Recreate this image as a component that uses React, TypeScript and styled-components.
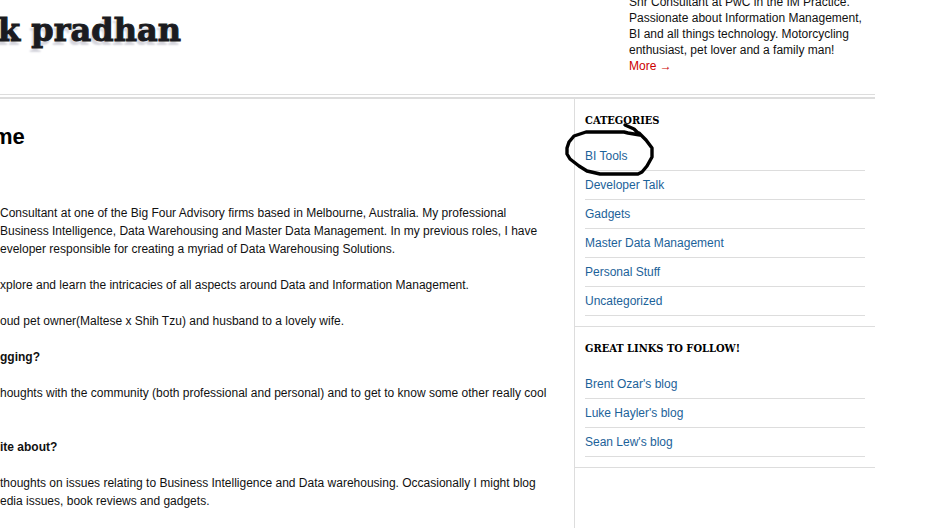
import React from "react";
import styled, { createGlobalStyle } from "styled-components";

const GlobalStyle = createGlobalStyle`
  * { box-sizing: border-box; }
  body {
    margin: 0;
    background: #fff;
    color: #111;
    font: 12px/18px "Liberation Sans", Arial, sans-serif;
    overflow: hidden;
  }
`;

const Page = styled.div`
  display: flex;
  flex-direction: column;
  min-height: 100vh;
  margin-right: 74px;
`;

const Header = styled.header`
  display: flex;
  justify-content: space-between;
  overflow: hidden;
  padding-bottom: 20px;
  border-bottom: 1px solid #ddd;
`;

const Logo = styled.div`
  margin: 10px 0 0 -2px;
  color: #1b1b20;
  font: bold 32px/40px "DejaVu Serif", serif;
  -webkit-text-stroke: 1px #1b1b20;
  text-shadow: -2px 4px 2px #d4d4dc;
  white-space: nowrap;
`;

const Intro = styled.p`
  width: 246px;
  margin: -6px 0 0;
  line-height: 16px;
`;

const MoreLink = styled.a`
  color: #c00;
  text-decoration: none;
`;

const Columns = styled.div`
  display: flex;
  flex: 1;
  margin-top: 2px;
  border-top: 2px solid #ddd;
`;

const Article = styled.main`
  flex: 1;
  min-width: 0;
  white-space: nowrap;
`;

const Title = styled.h1`
  margin: 24px 0 54px -7px;
  font-size: 22px;
  line-height: 27px;
  color: #000;
`;

const Paragraph = styled.p`
  margin: 0 0 18px;
`;

const Question = styled.h2`
  margin: 0 0 18px;
  font-size: 12px;
  line-height: 18px;
`;

const Sidebar = styled.aside`
  width: 301px;
  border-left: 1px solid #ddd;
`;

const Widget = styled.section`
  padding: 13px 10px 10px;
  border-bottom: 1px solid #ddd;
`;

const WidgetTitle = styled.h3`
  margin: 0 0 12px;
  color: #000;
  font: bold 11px/18px "DejaVu Serif Condensed", "DejaVu Serif", serif;
  text-transform: uppercase;
`;

const LinkList = styled.ul`
  margin: 0;
  padding: 0;
  list-style: none;
`;

const LinkItem = styled.li`
  position: relative;
  padding: 5px 0;
  border-bottom: 1px solid #ddd;
`;

const SideLink = styled.a`
  color: #1c6299;
  text-decoration: none;
`;

const Marker = styled.svg`
  position: absolute;
  left: -21px;
  top: -21px;
  pointer-events: none;
`;

const categories = [
  "BI Tools",
  "Developer Talk",
  "Gadgets",
  "Master Data Management",
  "Personal Stuff",
  "Uncategorized",
];

const blogs = ["Brent Ozar's blog", "Luke Hayler's blog", "Sean Lew's blog"];

const HandDrawnCircle = () => (
  <Marker width="92" height="58" viewBox="0 0 92 58" aria-hidden="true">
    <path
      d="M61 4 L70 8 L76 14 L64 12 L60 11 L22 11 L10 15 L5 21 L3 27 L3 33 L6 38 L15 45 L23 50 L36 53 L74 53 L78 51 L83 45 L88 36 L88 27 L82 19 L75 12"
      fill="none"
      stroke="#000"
      strokeWidth="3.4"
      strokeLinecap="round"
      strokeLinejoin="round"
    />
  </Marker>
);

type LinksProps = { title: string; items: string[]; marked?: string };

const Links = ({ title, items, marked }: LinksProps) => (
  <Widget>
    <WidgetTitle>{title}</WidgetTitle>
    <LinkList>
      {items.map((item) => (
        <LinkItem key={item}>
          <SideLink href="#">{item}</SideLink>
          {item === marked && <HandDrawnCircle />}
        </LinkItem>
      ))}
    </LinkList>
  </Widget>
);

export default function App() {
  return (
    <>
      <GlobalStyle />
      <Page>
        <Header>
          <Logo>k pradhan</Logo>
          <Intro>
            Snr Consultant at PwC in the IM Practice.
            <br />
            Passionate about Information Management,
            <br />
            BI and all things technology. Motorcycling
            <br />
            enthusiast, pet lover and a family man!
            <br />
            <MoreLink href="#">More →</MoreLink>
          </Intro>
        </Header>
        <Columns>
          <Article>
            <Title>me</Title>
            <Paragraph>
              Consultant at one of the Big Four Advisory firms based in Melbourne, Australia. My professional
              <br />
              Business Intelligence, Data Warehousing and Master Data Management. In my previous roles, I have
              <br />
              eveloper responsible for creating a myriad of Data Warehousing Solutions.
            </Paragraph>
            <Paragraph>
              xplore and learn the intricacies of all aspects around Data and Information Management.
            </Paragraph>
            <Paragraph>oud pet owner(Maltese x Shih Tzu) and husband to a lovely wife.</Paragraph>
            <Question>gging?</Question>
            <Paragraph>
              houghts with the community (both professional and personal) and to get to know some other really cool
              <br />
              <br />
            </Paragraph>
            <Question>ite about?</Question>
            <Paragraph>
              thoughts on issues relating to Business Intelligence and Data warehousing. Occasionally I might blog
              <br />
              edia issues, book reviews and gadgets.
            </Paragraph>
          </Article>
          <Sidebar>
            <Links title="Categories" items={categories} marked="BI Tools" />
            <Links title="Great links to follow!" items={blogs} />
          </Sidebar>
        </Columns>
      </Page>
    </>
  );
}
